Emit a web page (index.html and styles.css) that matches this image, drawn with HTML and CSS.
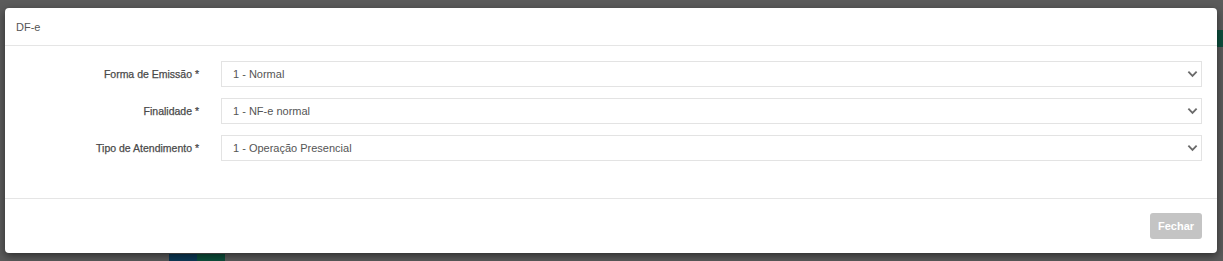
FILE: index.html
```html
<!DOCTYPE html>
<html lang="pt-BR">
<head>
    <meta charset="UTF-8">
    <title>DF-e</title>
    <link rel="stylesheet" href="styles.css">
</head>
<body>

<div class="backdrop">
    <div class="bg-tab"></div>
    <div class="bg-buttons">
        <span class="bg-btn blue"></span>
        <span class="bg-btn green"></span>
    </div>
</div>

<div class="modal">
    <div class="modal-header">DF-e</div>

    <div class="modal-body">
        <label class="field-label" for="forma">Forma de Emissão *</label>
        <div class="select-wrap">
            <select id="forma">
                <option>1 - Normal</option>
            </select>
            <svg class="chevron" viewBox="0 0 12 8"><path d="M1.5 1.5 L6 6 L10.5 1.5"/></svg>
        </div>

        <label class="field-label" for="finalidade">Finalidade *</label>
        <div class="select-wrap">
            <select id="finalidade">
                <option>1 - NF-e normal</option>
            </select>
            <svg class="chevron" viewBox="0 0 12 8"><path d="M1.5 1.5 L6 6 L10.5 1.5"/></svg>
        </div>

        <label class="field-label" for="atendimento">Tipo de Atendimento *</label>
        <div class="select-wrap">
            <select id="atendimento">
                <option>1 - Operação Presencial</option>
            </select>
            <svg class="chevron" viewBox="0 0 12 8"><path d="M1.5 1.5 L6 6 L10.5 1.5"/></svg>
        </div>
    </div>

    <div class="modal-footer">
        <button class="btn-close">Fechar</button>
    </div>
</div>

</body>
</html>
```

FILE: styles.css
```css
body {
    font-family: "Liberation Sans", Arial, sans-serif;
    background-color: #5b5b5b;
    margin: 0;
    padding: 0;
    height: 261px;
    overflow: hidden;
    position: relative;
}
.backdrop {
    position: absolute;
    top: 0;
    left: 0;
    width: 100%;
    height: 100%;
}
.bg-tab {
    position: absolute;
    right: 0;
    top: 30px;
    width: 8px;
    height: 17px;
    background-color: #0e4f3e;
}
.bg-buttons {
    position: absolute;
    left: 169px;
    top: 254px;
    display: flex;
}
.bg-btn {
    width: 28px;
    height: 8px;
}
.bg-btn.blue {
    background-color: #0d3a57;
}
.bg-btn.green {
    background-color: #0d4f3c;
}
.modal {
    position: absolute;
    left: 5px;
    top: 8px;
    width: 1212px;
    height: 245px;
    background-color: #fff;
    border-radius: 4px;
    box-shadow: 0 3px 9px rgba(0, 0, 0, 0.5);
    display: flex;
    flex-direction: column;
}
.modal-header {
    height: 38px;
    box-sizing: border-box;
    padding: 13px 11px;
    font-size: 11px;
    color: #555;
    border-bottom: 1px solid #e5e5e5;
}
.modal-body {
    display: grid;
    grid-template-columns: 179px 1fr;
    column-gap: 22px;
    row-gap: 11px;
    align-items: center;
    padding: 15px 15px 37px 15px;
    border-bottom: 1px solid #e5e5e5;
}
.field-label {
    text-align: right;
    font-size: 10.5px;
    color: #4a4a4a;
    -webkit-text-stroke: 0.25px #4a4a4a;
}
.select-wrap {
    position: relative;
}
.select-wrap select {
    appearance: none;
    -webkit-appearance: none;
    width: 100%;
    height: 26px;
    border: 1px solid #e3e3e3;
    border-radius: 0;
    background-color: #fff;
    padding: 0 11px;
    font-family: "Liberation Sans", Arial, sans-serif;
    font-size: 11px;
    color: #555;
    outline: none;
}
.chevron {
    position: absolute;
    right: 4px;
    top: 9px;
    width: 11px;
    height: 8px;
    fill: none;
    stroke: #6a6a6a;
    stroke-width: 2;
}
.modal-footer {
    flex: 1;
    display: flex;
    justify-content: flex-end;
    align-items: flex-start;
    padding: 14px 15px;
}
.btn-close {
    background-color: #c4c4c4;
    color: #fff;
    font-family: "Liberation Sans", Arial, sans-serif;
    font-size: 11px;
    font-weight: bold;
    border: none;
    border-radius: 3px;
    width: 52px;
    height: 26px;
    cursor: pointer;
}
```
